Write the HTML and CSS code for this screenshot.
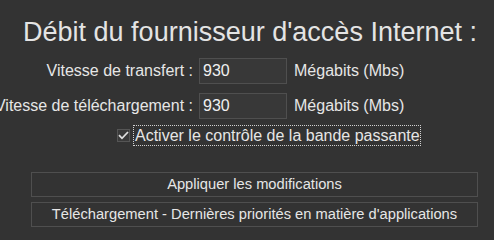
FILE: index.html
```html
<!DOCTYPE html>
<html lang="fr">
<head>
<meta charset="utf-8">
<link rel="stylesheet" href="styles.css">
</head>
<body>
<div class="panel">
  <h1 class="title">Débit du fournisseur d'accès Internet :</h1>
  <div class="form">
    <div class="row">
      <div class="label"><span>Vitesse de transfert :</span></div>
      <div class="input">930</div>
      <div class="unit">Mégabits (Mbs)</div>
    </div>
    <div class="row">
      <div class="label"><span>Vitesse de téléchargement :</span></div>
      <div class="input">930</div>
      <div class="unit">Mégabits (Mbs)</div>
    </div>
  </div>
  <div class="check-row">
    <span class="box"><svg width="13" height="13" viewBox="0 0 13 13"><path d="M2 6.2 L5 9.3 L11 3" fill="none" stroke="#e0e0e0" stroke-width="1.8"/></svg></span>
    <span class="check-label">Activer le contrôle de la bande passante</span>
  </div>
  <div class="buttons">
    <div class="btn">Appliquer les modifications</div>
    <div class="btn">Téléchargement - Dernières priorités en matière d'applications</div>
  </div>
</div>
</body>
</html>
```
FILE: styles.css
```css
html, body {
  margin: 0;
  padding: 0;
  background: #333333;
}
body {
  width: 494px;
  height: 234px;
  overflow: hidden;
  font-family: "Liberation Sans", Arial, sans-serif;
  color: #e6e6e6;
}
.panel {
  display: flex;
  flex-direction: column;
}
.title {
  margin: 0;
  padding-top: 17px;
  padding-left: 6px;
  height: 47px;
  box-sizing: border-box;
  font-size: 27px;
  font-weight: normal;
  line-height: 30px;
  text-align: center;
  color: #e4e4e4;
}
.form {
  display: flex;
  flex-direction: column;
  gap: 9px;
  margin-top: 11px;
}
.row {
  display: flex;
  align-items: center;
  height: 26px;
}
.label {
  width: 193px;
  flex: none;
  display: flex;
  justify-content: flex-end;
  white-space: nowrap;
  font-size: 16px;
}
.input {
  width: 88px;
  height: 26px;
  box-sizing: border-box;
  margin-left: 6px;
  border: 1px solid #4f4f4f;
  background: #383838;
  padding: 0 3px;
  font-size: 16px;
  line-height: 24px;
  color: #f0f0f0;
}
.unit {
  margin-left: 7px;
  font-size: 16px;
  white-space: nowrap;
}
.check-row {
  display: flex;
  align-items: center;
  margin-top: 6px;
  padding-left: 117px;
  height: 21px;
}
.box {
  width: 13px;
  height: 13px;
  box-sizing: border-box;
  border: 1px solid #555555;
  background: #3a3a3a;
  display: flex;
}
.box svg {
  margin: -1px;
}
.check-label {
  margin-left: 3px;
  border: 1px dotted #d0d0d0;
  padding: 0 0 0 1px;
  font-size: 16px;
  line-height: 19px;
  white-space: nowrap;
}
.buttons {
  display: flex;
  flex-direction: column;
  gap: 5px;
  margin-top: 26px;
  margin-left: 31px;
  width: 447px;
}
.btn {
  height: 25px;
  box-sizing: border-box;
  border: 1px solid #4f4f4f;
  background: #333333;
  font-size: 14.7px;
  line-height: 23px;
  text-align: center;
  color: #e6e6e6;
}
```
